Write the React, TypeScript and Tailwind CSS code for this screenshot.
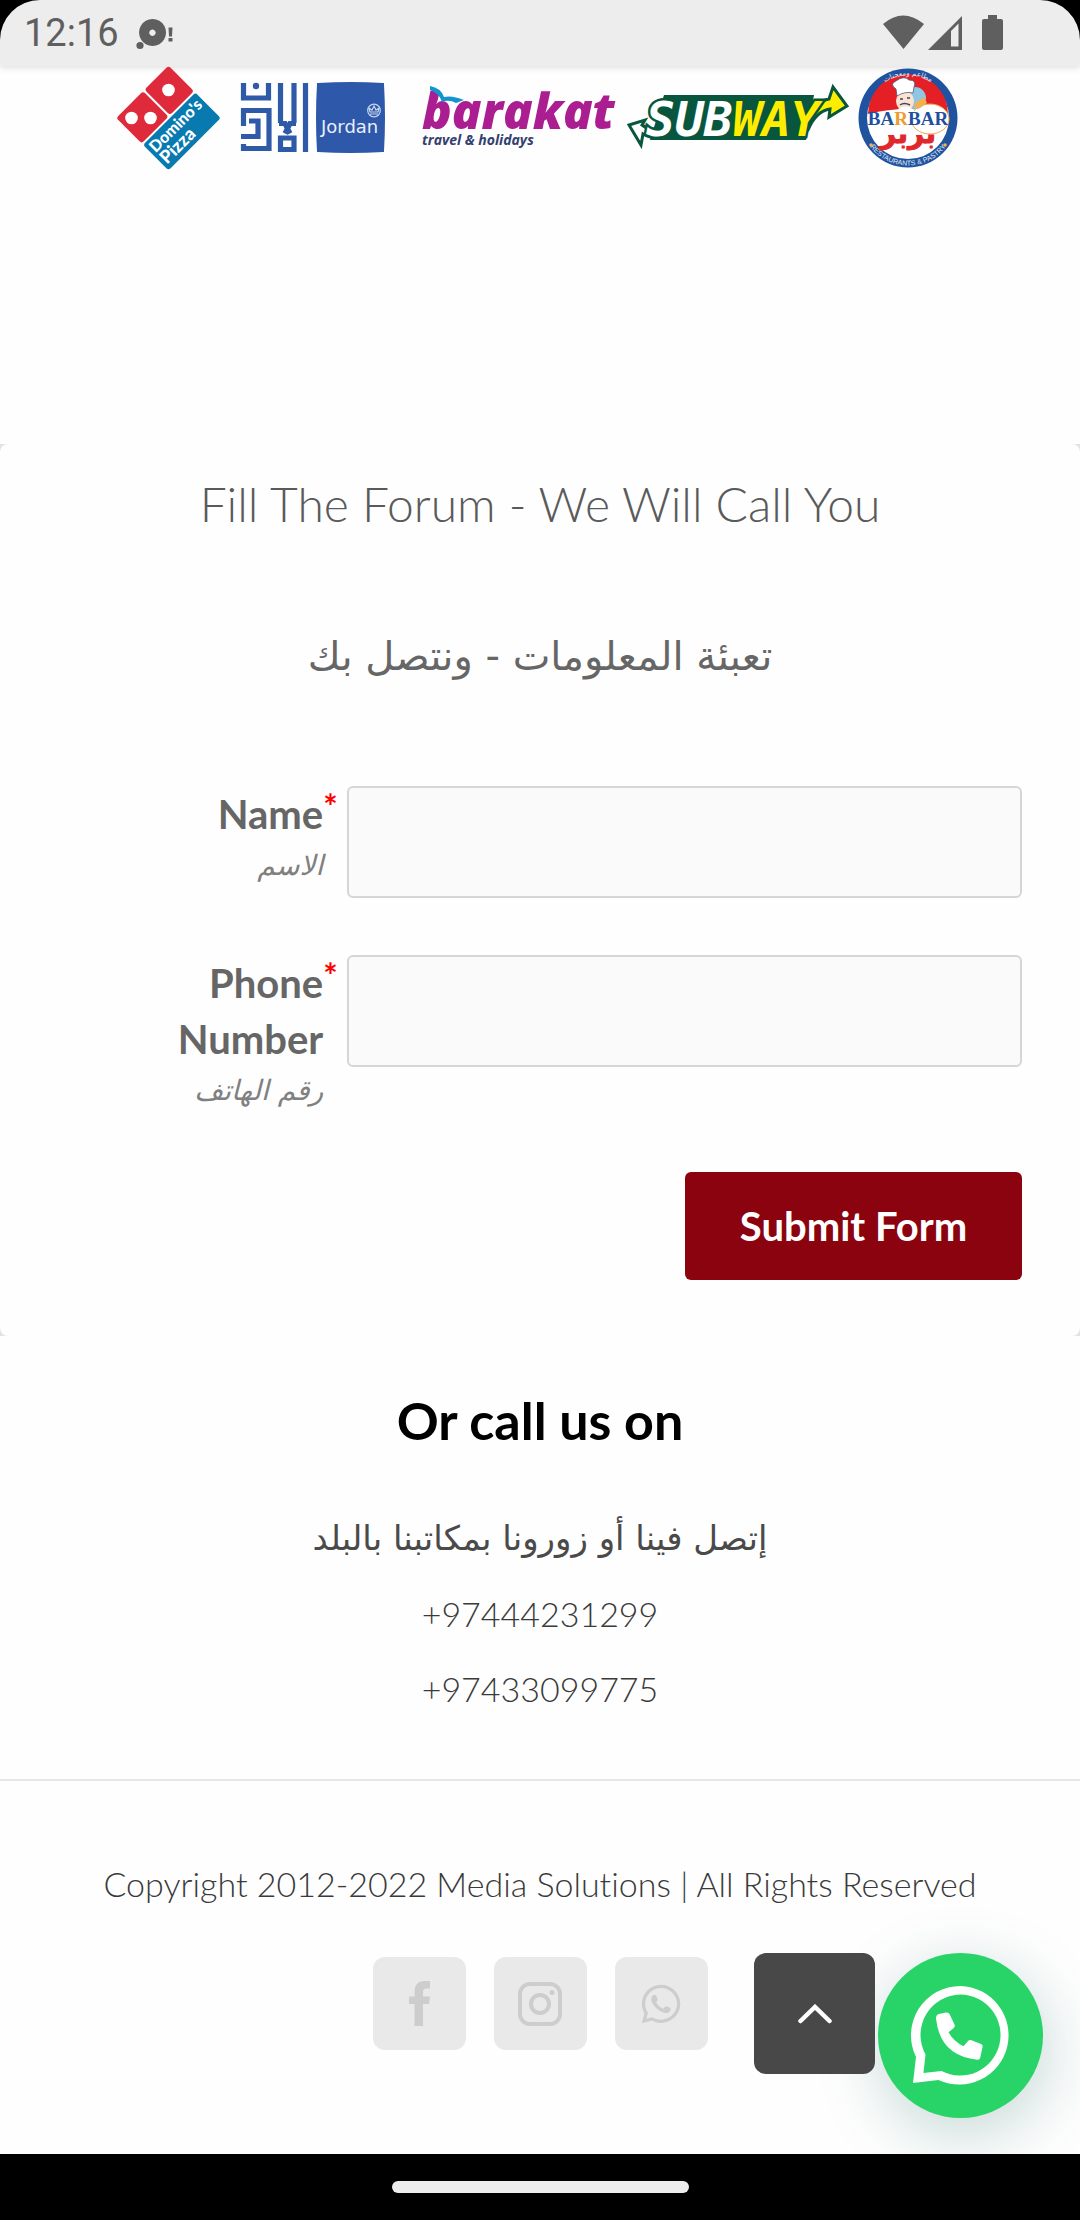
import { FaWhatsapp } from "react-icons/fa";

const formFields = [
	{ id: "name", type: "text", label: "Name", hint: "الاسم" },
	{ id: "phone", type: "tel", label: "Phone Number", hint: "رقم الهاتف" },
];

const phones = ["+97444231299", "+97433099775"];

const StatusBar = () => {
	return (
		<header className="bg-black">
			<div className="flex h-[66px] items-center justify-between rounded-t-[40px] bg-[#ededed] pl-6 pr-[77px] text-[#5f5f5f] shadow-[0_2px_6px_rgba(0,0,0,0.12)]">
				<div className="flex items-center gap-4">
					<span className="font-['Roboto',sans-serif] text-[38px] leading-none">
						12:16
					</span>
					<svg className="h-9 w-10" viewBox="136 14 40 36" fill="#5f5f5f">
						<path
							fillRule="evenodd"
							d="M153.500 18a13.500 13.500 0 1 0 .1 0zM153.500 28.500a3.200 3.200 0 1 1-.1 0z"
						/>
						<circle cx="141" cy="44.500" r="3.600" />
						<path d="M169.500 26.500h4l-.5 9h-3zM169.500 37h4v3.500h-4z" />
					</svg>
				</div>
				<svg className="h-9 w-[120px]" viewBox="883 15 120 36" fill="#5f5f5f">
					<path d="M883 24q20-17 41 0l-20.500 25z" />
					<path
						fillRule="evenodd"
						d="M962 16v34h-34zM951 31v15.500h7.500V23.500z"
					/>
					<path d="M988 15h9v4h4q2 0 2 2v27q0 2-2 2h-17q-2 0-2-2V21q0-2 2-2h4z" />
				</svg>
			</div>
		</header>
	);
};

const DominosLogo = () => (
	<svg className="h-[110px] w-[105px]" viewBox="116 66 105 110">
		<g transform="translate(168.500 118) rotate(-45)">
			<rect x="-37" y="-37" width="38" height="36" rx="3" fill="#de2a3b" />
			<rect x="3" y="-37" width="34" height="36" rx="3" fill="#de2a3b" />
			<rect x="-37" y="1" width="74" height="36" rx="3" fill="#087aaf" />
			<g fill="#fff" fontFamily="Lato, sans-serif" fontWeight="900">
				<text x="-34" y="16" fontSize="16">
					Domino's
				</text>
				<text x="-34" y="32" fontSize="18">
					Pizza
				</text>
			</g>
		</g>
		<circle cx="131.500" cy="118" r="6.300" fill="#fff" />
		<circle cx="150.500" cy="118" r="6.300" fill="#fff" />
		<circle cx="168.500" cy="90" r="6.300" fill="#fff" />
	</svg>
);

const JordanLogo = () => (
	<svg className="h-[110px] w-[168px]" viewBox="229 66 168 110">
		<g fill="none" stroke="#2f5aa8" strokeWidth="5.200">
			<path d="M243.500 83v15h25V83" />
			<path d="M243.500 126v-15.500h25.500V148.500H243.500V144" />
			<path d="M249 121h9v15.500H241" />
			<path d="M280.500 83v40M294 83v40M279 123.500h6l5 10M296 123.500h-6l-5 10" />
			<path d="M280.500 138h13.500v11.500h-13.500z" />
			<path d="M305.500 83v69" />
		</g>
		<circle cx="256" cy="86" r="3.200" fill="#2f5aa8" />
		<path
			d="M318 84q33-2 65 0 2 34 0 67-33 2-65 0-2-33 0-67z"
			fill="#2e58a9"
			stroke="#2e58a9"
			strokeWidth="2"
		/>
		<g fill="none" stroke="#c8d5ee" strokeWidth="1.200">
			<circle cx="374" cy="110.500" r="6.300" />
			<path d="M370 112l-1-4 3 2 2-4 2 4 3-2-1 4zM370 114h8" />
		</g>
		<text
			x="321"
			y="133"
			fontSize="18"
			fontFamily="'DejaVu Sans', sans-serif"
			fill="#e9effa"
		>
			Jordan
		</text>
	</svg>
);

const BarakatLogo = () => (
	<svg className="h-[110px] w-[214px]" viewBox="405 66 214 110">
		<text
			x="422"
			y="129"
			fontSize="49"
			fontFamily="'Open Sans', 'Noto Sans', sans-serif"
			fontWeight="800"
			fontStyle="italic"
			fill="#aa1e91"
		>
			barakat
		</text>
		<path
			d="M430 86q11 2 14 11 8-2 20 3l-8 3q-7-4-14-1-3-9-12-12z"
			fill="#1494cf"
		/>
		<text
			x="422"
			y="145"
			fontSize="14"
			fontFamily="'Open Sans', 'Noto Sans', sans-serif"
			fontWeight="700"
			fontStyle="italic"
			fill="#34406f"
		>
			travel &amp; holidays
		</text>
	</svg>
);

const SubwayLogo = () => (
	<svg className="h-[110px] w-[222px]" viewBox="627 66 222 110">
		<path
			d="M667 138q-14 2-24-4l-2 11-12-20 16-5-3 5q8 6 16 3z"
			fill="#fff"
			stroke="#07563d"
			strokeWidth="3"
		/>
		<path d="M664 95h150l-8 45H650z" fill="#07563d" />
		<path
			d="M798 130q6-26 31-31l4-12 14 19-18 11 1-8q-14 2-22 21z"
			fill="#ffed00"
			stroke="#07563d"
			strokeWidth="3"
		/>
		<g
			fontFamily="'DejaVu Sans Mono', monospace"
			fontWeight="700"
			fontStyle="italic"
			fontSize="48"
			stroke="#07563d"
			strokeWidth="5"
			paintOrder="stroke"
		>
			<text x="646" y="136" fill="#fff">
				SUB
			</text>
			<text x="733" y="136" fill="#ffed00">
				WAY
			</text>
		</g>
	</svg>
);

const BarbarLogo = () => (
	<svg className="h-[110px] w-[107px]" viewBox="857 66 107 110">
		<circle cx="908" cy="118" r="49.500" fill="#1f539f" />
		<circle cx="908" cy="118" r="41" fill="#fff" />
		<path d="M868 114a40 40 0 0 1 80 0q-40-10-80 0z" fill="#e41f26" />
		<ellipse cx="930" cy="119" rx="19" ry="15" fill="#fff" stroke="#f3a63b" />
		<circle cx="915" cy="98" r="11" fill="#8ec6e4" />
		<path d="M913 105l11-8 3 6-9 6z" fill="#f3b04c" />
		<ellipse cx="905" cy="101" rx="9" ry="10" fill="#fbe3cf" />
		<path
			d="M897 96l-1-7q-7-5 0-8 8-6 13-1 8 0 5 7l-1 6q-8-2-16 3z"
			fill="#fff"
			stroke="#4d5c7c"
			strokeWidth="0.800"
		/>
		<path d="M898 109q8-5 15 0l3 7h-20z" fill="#fff" />
		<path
			d="M900 99h3M907 98h3M900 105q4-3 10 0"
			stroke="#39476c"
			strokeWidth="1.500"
			fill="none"
		/>
		<text
			x="908"
			y="125"
			textAnchor="middle"
			fontSize="19"
			fontFamily="'Liberation Serif', serif"
			fontWeight="700"
			fill="#204f9d"
		>
			BA<tspan fill="#ef9b2d">R</tspan>BAR
		</text>
		<text
			x="908"
			y="143"
			textAnchor="middle"
			fontSize="28"
			fontFamily="'DejaVu Sans', sans-serif"
			fontWeight="700"
			fill="#e0282c"
			stroke="#e0282c"
		>
			بربر
		</text>
		<path id="ring-top" d="M865.500 118a42.500 42.500 0 0 1 85 0" fill="none" />
		<path id="ring-bottom" d="M860.500 118a47.500 47.500 0 0 0 95 0" fill="none" />
		<g fill="#e5edf8" fontSize="7" textAnchor="middle">
			<text fontFamily="'DejaVu Sans', sans-serif">
				<textPath href="#ring-top" startOffset="50%">
					مطاعم ومعجنات
				</textPath>
			</text>
			<text fontFamily="'Liberation Sans', sans-serif">
				<textPath href="#ring-bottom" startOffset="50%">
					RESTAURANTS &amp; PASTRY
				</textPath>
			</text>
		</g>
		<circle cx="871" cy="145" r="1.800" fill="#f3b04c" />
		<circle cx="945" cy="145" r="1.800" fill="#f3b04c" />
	</svg>
);

const CallForm = () => {
	return (
		<section className="bg-[#e2e2e2]">
			<div className="rounded-lg bg-[#fefefe] px-[58px] pb-14 pt-[30px] text-[#666]">
				<h2 className="text-center text-[48px] font-light leading-[60px] text-[#5a5a5a]">
					Fill The Forum - We Will Call You
				</h2>
				<p
					dir="rtl"
					className="mt-[92px] text-center font-['DejaVu_Sans',sans-serif] text-[40px] leading-[60px]"
				>
					تعبئة المعلومات - ونتصل بك
				</p>
				<form className="mt-[100px] flex flex-col gap-[57px]">
					{formFields.map((field) => (
						<div key={field.id} className="flex items-start">
							<label
								htmlFor={field.id}
								className="w-[30%] pl-20 pr-6 text-right"
							>
								<span className="relative block text-[40px] font-bold leading-[56px]">
									{field.label}
									<span className="absolute left-full top-0 text-[34px] leading-10 text-[#f00]">
										*
									</span>
								</span>
								<span
									dir="rtl"
									className="block text-right font-['DejaVu_Sans',sans-serif] text-[28px] italic leading-[48px] text-[#808080]"
								>
									{field.hint}
								</span>
							</label>
							<input
								id={field.id}
								type={field.type}
								required
								className="h-28 flex-1 rounded-md border-2 border-[#d6d6d6] bg-[#fafafa] px-6 text-[40px]"
							/>
						</div>
					))}
					<button
						type="submit"
						className="h-[108px] w-[337px] self-end rounded-md bg-[#8b030e] text-[40px] font-bold text-white"
					>
						Submit Form
					</button>
				</form>
			</div>
		</section>
	);
};

const Footer = () => {
	return (
		<footer className="relative overflow-hidden border-t-2 border-[#e7e7e7] pb-[104px] pt-[83px]">
			<p className="text-center text-[34px] font-light leading-10 text-[#3a3a3a]">
				Copyright 2012-2022 Media Solutions | All Rights Reserved
			</p>
			<div className="mt-[53px] flex justify-center gap-7 text-[#cdcdcd]">
				<a
					href="#facebook"
					aria-label="Facebook"
					className="flex size-[93px] items-center justify-center rounded-xl bg-[#e9e9e9]"
				>
					<svg className="h-[45px] w-[21px]" viewBox="0 0 21 45" fill="currentColor">
						<path d="M5.500 45V23H0v-7.500h5.500V11Q5.500 0 16 0h5v7.500h-3.500q-3.500 0-3.500 3.500v4.500h7L20 23h-6v22z" />
					</svg>
				</a>
				<a
					href="#instagram"
					aria-label="Instagram"
					className="flex size-[93px] items-center justify-center rounded-xl bg-[#e9e9e9]"
				>
					<svg
						className="size-11"
						viewBox="0 0 44 44"
						fill="none"
						stroke="currentColor"
						strokeWidth="4"
					>
						<rect x="2" y="2" width="40" height="40" rx="10" />
						<circle cx="22" cy="22" r="9" />
						<circle cx="34" cy="10.500" r="2.500" fill="currentColor" stroke="none" />
					</svg>
				</a>
				<a
					href="#whatsapp"
					aria-label="WhatsApp"
					className="flex size-[93px] items-center justify-center rounded-xl bg-[#e9e9e9]"
				>
					<FaWhatsapp className="size-11" />
				</a>
			</div>
			{/* floating actions */}
			<button
				aria-label="Open WhatsApp chat"
				className="absolute bottom-9 right-[37px] size-[165px] rounded-full bg-[#28d468] shadow-[3px_16px_66px_rgba(7,94,84,0.24)]"
			>
				<svg viewBox="0 0 165 165" fill="#fff">
					<path
						fillRule="evenodd"
						d="M82.500 33a49.300 49.300 0 1 1-22 94L35 130l3-26A49.300 49.300 0 0 1 82.500 33zM82.500 41.500a40.500 40.500 0 0 0-35 60L45.500 120l18-2a40.500 40.500 0 1 0 19-76.500z"
					/>
					<path d="M61 61l7-1.500q2.500-.5 3.500 1.500l5 10.500q1 2-1 3.700l-5 4q5 9 15 14l4.500-5.200q1.500-1.500 3.500-.8l9.500 3.800q2 .8 1.500 3l-2.200 10.500q-.5 2.500-3 2.200Q62 103 58 65.500q0-3.700 3-4.500z" />
				</svg>
			</button>
			<button
				aria-label="Back to top"
				className="absolute bottom-20 right-[205px] flex size-[121px] items-center justify-center rounded-xl bg-[#484848]"
			>
				<svg
					className="h-5 w-9"
					viewBox="0 0 36 20"
					fill="none"
					stroke="#fff"
					strokeWidth="4.500"
					strokeLinecap="round"
				>
					<path d="M3.500 17L18 3l14.500 14" />
				</svg>
			</button>
		</footer>
	);
};

const App = () => {
	return (
		<div className="flex min-h-screen flex-col bg-[#fefefe] font-['Lato',sans-serif] [font-variant-ligatures:none]">
			<StatusBar />
			<main className="flex-1">
				<section className="relative mb-[268px] flex justify-center gap-2">
					<DominosLogo />
					<JordanLogo />
					<BarakatLogo />
					<SubwayLogo />
					<BarbarLogo />
				</section>
				<CallForm />
				<section className="pb-[53px] pt-[54px] text-center text-[#4a4a4a]">
					<h2 className="text-[52px] font-bold leading-[60px] text-black">
						Or call us on
					</h2>
					<p
						dir="rtl"
						className="mt-[51px] font-['DejaVu_Sans',sans-serif] text-[34px] leading-[75px]"
					>
						إتصل فينا أو زورونا بمكاتبنا بالبلد
					</p>
					{phones.map((phone) => (
						<a
							key={phone}
							href={`tel:${phone}`}
							className="block text-[34px] font-light leading-[75px] text-[#3a3a3a]"
						>
							{phone}
						</a>
					))}
				</section>
				<Footer />
			</main>
			<div className="flex h-[66px] items-center justify-center bg-black">
				<div className="h-3 w-[297px] rounded-full bg-[#ededed]" />
			</div>
		</div>
	);
};

export default App;
